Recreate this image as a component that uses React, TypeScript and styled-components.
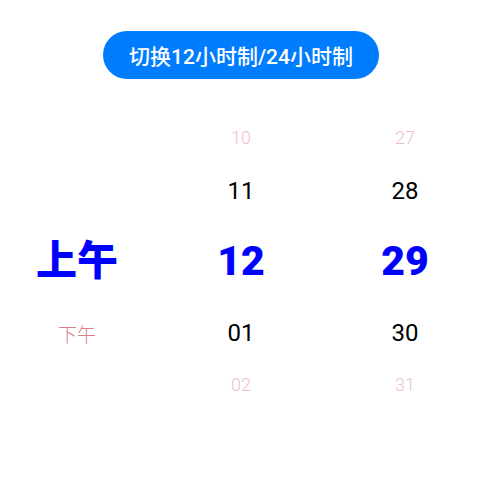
import styled, { createGlobalStyle } from 'styled-components';

const GlobalStyle = createGlobalStyle`
  html, body {
    margin: 0;
    padding: 0;
    background: #ffffff;
  }
  body {
    font-family: Roboto, "Noto Sans CJK SC", sans-serif;
  }
`;

const Page = styled.div`
  width: 482px;
  height: 477px;
  display: flex;
  flex-direction: column;
  align-items: center;
  padding-top: 31px;
  box-sizing: border-box;
`;

const ToggleButton = styled.button`
  height: 48px;
  width: 276px;
  border: none;
  border-radius: 24px;
  background: #007dff;
  color: #ffffff;
  font-family: Roboto, "Noto Sans CJK SC", sans-serif;
  font-size: 21px;
  font-weight: 500;
  display: flex;
  align-items: center;
  justify-content: center;
  padding: 0;
  cursor: pointer;
`;

const Picker = styled.div`
  margin-top: 33px;
  width: 482px;
  display: grid;
  grid-template-columns: 154px 174px 154px;
`;

const Column = styled.div`
  display: flex;
  flex-direction: column;
`;

type Tone = 'fade' | 'normal' | 'selected' | 'meridiemFade' | 'empty';

const slotHeights = [52, 53, 89, 53, 52];

const Slot = styled.div<{ $h: number }>`
  height: ${({ $h }) => $h}px;
  display: flex;
  align-items: center;
  justify-content: center;
`;

const toneStyles: Record<Tone, string> = {
  fade: 'font-size: 18px; font-weight: 300; color: #efc0c8;',
  normal: 'font-size: 24px; font-weight: 400; color: #000000;',
  selected: 'font-size: 41px; font-weight: 900; color: #0000ff;',
  meridiemFade: 'font-size: 19px; font-weight: 300; color: #dc7e86; padding-top: 6px;',
  empty: '',
};

const Label = styled.span<{ $tone: Tone }>`
  line-height: 1;
  white-space: nowrap;
  ${({ $tone }) => toneStyles[$tone]}
`;

type Cell = { text: string; tone: Tone };

const columns: Cell[][] = [
  [
    { text: '', tone: 'empty' },
    { text: '', tone: 'empty' },
    { text: '上午', tone: 'selected' },
    { text: '下午', tone: 'meridiemFade' },
    { text: '', tone: 'empty' },
  ],
  [
    { text: '10', tone: 'fade' },
    { text: '11', tone: 'normal' },
    { text: '12', tone: 'selected' },
    { text: '01', tone: 'normal' },
    { text: '02', tone: 'fade' },
  ],
  [
    { text: '27', tone: 'fade' },
    { text: '28', tone: 'normal' },
    { text: '29', tone: 'selected' },
    { text: '30', tone: 'normal' },
    { text: '31', tone: 'fade' },
  ],
];

export default function App() {
  return (
    <>
      <GlobalStyle />
      <Page>
        <ToggleButton>切换12小时制/24小时制</ToggleButton>
        <Picker>
          {columns.map((col, ci) => (
            <Column key={ci}>
              {col.map((cell, ri) => (
                <Slot key={ri} $h={slotHeights[ri]}>
                  <Label $tone={cell.tone}>{cell.text}</Label>
                </Slot>
              ))}
            </Column>
          ))}
        </Picker>
      </Page>
    </>
  );
}
